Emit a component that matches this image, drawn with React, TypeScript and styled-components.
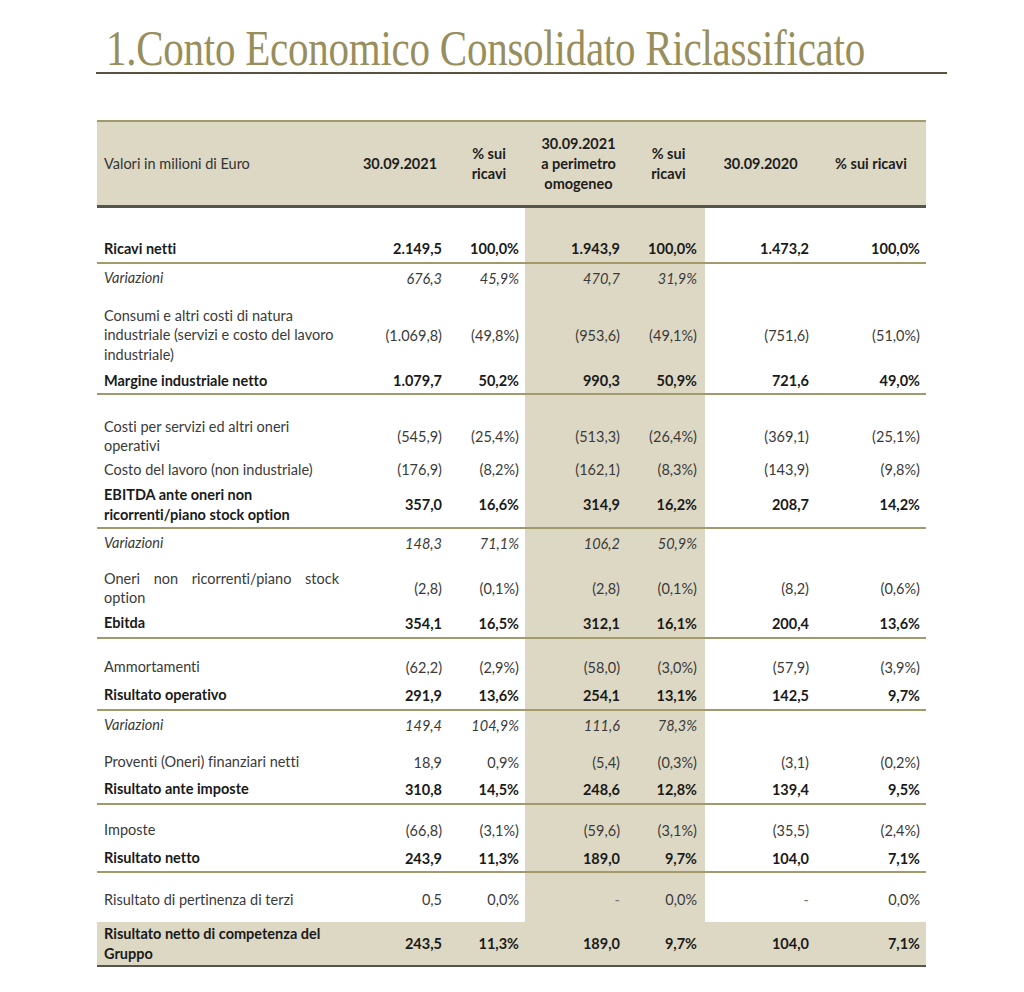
import React from "react";
import styled, { createGlobalStyle } from "styled-components";

const Global = createGlobalStyle`
  html, body { margin: 0; padding: 0; background: #ffffff; }
  body {
    font-family: "Lato", "Liberation Sans", sans-serif;
    font-variant-ligatures: none;
    font-feature-settings: "liga" 0, "clig" 0;
  }
`;

const COLS = "250px 106px 72px 107px 73px 111px 110px";
const SHADE = "#ddd8c4";
const GOLD = "#a19a6c";

const Page = styled.div`
  width: 1024px;
  height: 992px;
  padding-top: 24px;
  box-sizing: border-box;
`;

const TitleBlock = styled.div`
  margin-left: 96px;
  width: 851px;
  border-bottom: 2px solid #57533e;
  height: 48px;
  overflow: visible;
`;

const Title = styled.h1`
  margin: 0 0 0 10px;
  font-family: "Liberation Serif", serif;
  font-weight: 400;
  font-size: 50px;
  line-height: 48px;
  color: #978e5c;
  white-space: nowrap;
  transform: scaleX(0.82);
  transform-origin: left center;
  letter-spacing: -0.3px;
`;

const Table = styled.div`
  margin: 46px 0 0 97px;
  width: 829px;
  color: #333333;
  font-size: 14.5px;
`;

const HeaderRow = styled.div`
  display: grid;
  grid-template-columns: ${COLS};
  background: ${SHADE};
  border-top: 2px solid ${GOLD};
  border-bottom: 3px solid #55554d;
  height: 83px;
`;

const HeadCell = styled.div<{ $left?: boolean }>`
  display: flex;
  align-items: center;
  justify-content: ${(p) => (p.$left ? "flex-start" : "center")};
  text-align: ${(p) => (p.$left ? "left" : "center")};
  padding-left: ${(p) => (p.$left ? "7px" : "0")};
  font-weight: ${(p) => (p.$left ? 400 : 700)};
  color: ${(p) => (p.$left ? "#333" : "#1d1d1d")};
  line-height: 20px;
`;

const Row = styled.div<{ $rule?: "gold" | "dark"; $shade?: boolean }>`
  display: grid;
  grid-template-columns: ${COLS};
  background: ${(p) => (p.$shade ? SHADE : "transparent")};
  border-bottom: ${(p) =>
    p.$rule === "gold" ? `2px solid ${GOLD}` : p.$rule === "dark" ? "2px solid #55554d" : "none"};
  & > :nth-child(4),
  & > :nth-child(5) {
    background: ${SHADE};
  }
`;

type Kind = "normal" | "bold" | "italic";

const Cell = styled.div<{ $pt: number; $h: number; $kind: Kind; $pr?: number }>`
  box-sizing: content-box;
  height: ${(p) => p.$h}px;
  padding-top: ${(p) => p.$pt}px;
  padding-right: ${(p) => p.$pr ?? 0}px;
  display: flex;
  align-items: center;
  justify-content: flex-end;
  font-weight: ${(p) => (p.$kind === "bold" ? 700 : 400)};
  font-style: ${(p) => (p.$kind === "italic" ? "italic" : "normal")};
  color: ${(p) => (p.$kind === "bold" ? "#1a1a1a" : "#3a3a3a")};
  white-space: nowrap;
`;

const LabelCell = styled(Cell)<{ $justify?: boolean }>`
  justify-content: flex-start;
  padding-left: 7px;
  padding-right: 8px;
  white-space: normal;
  line-height: 19.5px;
  & > span {
    display: block;
    width: 100%;
    text-align: ${(p) => (p.$justify ? "justify" : "left")};
    text-align-last: left;
  }
`;

const Dash = styled.span`
  color: #777;
`;

type RowData = {
  label: string;
  v: string[];
  kind: Kind;
  pt: number;
  h: number;
  rule?: "gold" | "dark";
  shade?: boolean;
  justify?: boolean;
};

const rows: RowData[] = [
  { label: "Ricavi netti", v: ["2.149,5", "100,0%", "1.943,9", "100,0%", "1.473,2", "100,0%"], kind: "bold", pt: 27, h: 27, rule: "gold" },
  { label: "Variazioni", v: ["676,3", "45,9%", "470,7", "31,9%", "", ""], kind: "italic", pt: 0, h: 28 },
  { label: "Consumi e altri costi di natura industriale (servizi e costo del lavoro industriale)", v: ["(1.069,8)", "(49,8%)", "(953,6)", "(49,1%)", "(751,6)", "(51,0%)"], kind: "normal", pt: 10, h: 66 },
  { label: "Margine industriale netto", v: ["1.079,7", "50,2%", "990,3", "50,9%", "721,6", "49,0%"], kind: "bold", pt: 0, h: 25, rule: "gold" },
  { label: "Costi per servizi ed altri oneri operativi", v: ["(545,9)", "(25,4%)", "(513,3)", "(26,4%)", "(369,1)", "(25,1%)"], kind: "normal", pt: 20, h: 42 },
  { label: "Costo del lavoro (non industriale)", v: ["(176,9)", "(8,2%)", "(162,1)", "(8,3%)", "(143,9)", "(9,8%)"], kind: "normal", pt: 0, h: 25 },
  { label: "EBITDA ante oneri non ricorrenti/piano stock option", v: ["357,0", "16,6%", "314,9", "16,2%", "208,7", "14,2%"], kind: "bold", pt: 0, h: 45, rule: "gold" },
  { label: "Variazioni", v: ["148,3", "71,1%", "106,2", "50,9%", "", ""], kind: "italic", pt: 0, h: 28 },
  { label: "Oneri non ricorrenti/piano stock option", v: ["(2,8)", "(0,1%)", "(2,8)", "(0,1%)", "(8,2)", "(0,6%)"], kind: "normal", pt: 10, h: 42, justify: true },
  { label: "Ebitda", v: ["354,1", "16,5%", "312,1", "16,1%", "200,4", "13,6%"], kind: "bold", pt: 0, h: 28, rule: "gold" },
  { label: "Ammortamenti", v: ["(62,2)", "(2,9%)", "(58,0)", "(3,0%)", "(57,9)", "(3,9%)"], kind: "normal", pt: 14, h: 28 },
  { label: "Risultato operativo", v: ["291,9", "13,6%", "254,1", "13,1%", "142,5", "9,7%"], kind: "bold", pt: 0, h: 28, rule: "gold" },
  { label: "Variazioni", v: ["149,4", "104,9%", "111,6", "78,3%", "", ""], kind: "italic", pt: 0, h: 28 },
  { label: "Proventi (Oneri) finanziari netti", v: ["18,9", "0,9%", "(5,4)", "(0,3%)", "(3,1)", "(0,2%)"], kind: "normal", pt: 10, h: 26 },
  { label: "Risultato ante imposte", v: ["310,8", "14,5%", "248,6", "12,8%", "139,4", "9,5%"], kind: "bold", pt: 0, h: 28, rule: "gold" },
  { label: "Imposte", v: ["(66,8)", "(3,1%)", "(59,6)", "(3,1%)", "(35,5)", "(2,4%)"], kind: "normal", pt: 10, h: 30 },
  { label: "Risultato netto", v: ["243,9", "11,3%", "189,0", "9,7%", "104,0", "7,1%"], kind: "bold", pt: 0, h: 26, rule: "gold" },
  { label: "Risultato di pertinenza di terzi", v: ["0,5", "0,0%", "-", "0,0%", "-", "0,0%"], kind: "normal", pt: 4, h: 45 },
  { label: "Risultato netto di competenza del Gruppo", v: ["243,5", "11,3%", "189,0", "9,7%", "104,0", "7,1%"], kind: "bold", pt: 0, h: 43, rule: "dark", shade: true },
];

const PAD = [11, 6, 12, 8, 7, 6];

export default function App() {
  return (
    <Page>
      <Global />
      <TitleBlock>
        <Title>1.Conto Economico Consolidato Riclassificato</Title>
      </TitleBlock>
      <Table>
        <HeaderRow>
          <HeadCell $left>Valori in milioni di Euro</HeadCell>
          <HeadCell>30.09.2021</HeadCell>
          <HeadCell>
            % sui
            <br />
            ricavi
          </HeadCell>
          <HeadCell>
            30.09.2021
            <br />a perimetro
            <br />
            omogeneo
          </HeadCell>
          <HeadCell>
            % sui
            <br />
            ricavi
          </HeadCell>
          <HeadCell>30.09.2020</HeadCell>
          <HeadCell>% sui ricavi</HeadCell>
        </HeaderRow>
        {rows.map((r, i) => (
          <Row key={i} $rule={r.rule} $shade={r.shade}>
            <LabelCell $pt={r.pt} $h={r.h} $kind={r.kind} $justify={r.justify}>
              <span>{r.label}</span>
            </LabelCell>
            {r.v.map((val, j) => (
              <Cell key={j} $pt={r.pt} $h={r.h} $kind={r.kind} $pr={PAD[j]}>
                {val === "-" ? <Dash>-</Dash> : val}
              </Cell>
            ))}
          </Row>
        ))}
      </Table>
    </Page>
  );
}
